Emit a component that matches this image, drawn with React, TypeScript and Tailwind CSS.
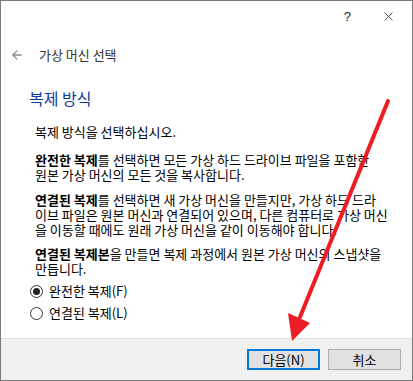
import { ArrowLeft, X } from "lucide-react";

function Radio({ checked, label }: { checked?: boolean; label: string }) {
  return (
    <label className="flex items-center gap-[6px] h-[20px]">
      <span className="w-[13px] h-[13px] rounded-full border border-[#333] bg-white flex items-center justify-center">
        {checked && <span className="w-[7px] h-[7px] rounded-full bg-[#222]" />}
      </span>
      <span>{label}</span>
    </label>
  );
}

export default function App() {
  return (
    <div className="relative w-[413px] h-[381px] bg-white border border-[#7a7a7a] flex flex-col text-[13px] text-black font-['Noto_Sans_CJK_KR','Noto_Sans',sans-serif] overflow-hidden">
      {/* title bar */}
      <div className="h-[31px] flex justify-end items-center pr-[16px] gap-[30px] shrink-0">
        <span className="text-[13px] font-['Liberation_Sans',sans-serif] text-[#222]">?</span>
        <X className="w-[15px] h-[15px] text-[#222]" strokeWidth={1.2} />
      </div>

      {/* back + breadcrumb */}
      <div className="mt-[13px] h-[20px] flex items-center pl-[9px] gap-[15px] shrink-0">
        <ArrowLeft className="w-[14px] h-[14px] text-[#8a8a8a]" strokeWidth={2.2} />
        <span className="text-[#333]">가상 머신 선택</span>
      </div>

      {/* body */}
      <div className="pl-[28px] pr-[10px]">
        <h1 className="mt-[21px] h-[24px] leading-[24px] text-[16px] text-[#0d3aa0]">복제 방식</h1>

        <div className="pl-[6px] leading-[15px] whitespace-nowrap">
          <p className="mt-[14px]">복제 방식을 선택하십시오.</p>
          <p className="mt-[13px]">
            <b>완전한 복제</b>를 선택하면 모든 가상 하드 드라이브 파일을 포함한
            <br />
            원본 가상 머신의 모든 것을 복사합니다.
          </p>
          <p className="mt-[10px]">
            <b>연결된 복제</b>를 선택하면 새 가상 머신을 만들지만, 가상 하드 드라
            <br />
            이브 파일은 원본 머신과 연결되어 있으며, 다른 컴퓨터로 가상 머신
            <br />
            을 이동할 때에도 원래 가상 머신을 같이 이동해야 합니다.
          </p>
          <p className="mt-[9px]">
            <b>연결된 복제본</b>을 만들면 복제 과정에서 원본 가상 머신의 스냅샷을
            <br />
            만듭니다.
          </p>
        </div>

        <div className="mt-[5px] flex flex-col gap-[2px] pl-[1px]">
          <Radio checked label="완전한 복제(F)" />
          <Radio label="연결된 복제(L)" />
        </div>
      </div>

      {/* footer */}
      <div className="mt-auto h-[42px] bg-[#f0f0f0] border-t border-[#dfdfdf] flex items-center justify-end gap-[8px] pr-[11px] shrink-0">
        <button className="w-[73px] h-[21px] bg-[#e1e1e1] border-2 border-[#0078d7] text-[13px] leading-none">
          다음(N)
        </button>
        <button className="w-[73px] h-[21px] bg-[#e1e1e1] border border-[#adadad] text-[13px] leading-none">
          취소
        </button>
      </div>

      {/* red annotation arrow */}
      <svg className="absolute left-0 top-0 pointer-events-none" width="413" height="381">
        <line x1="387" y1="100" x2="299" y2="316" stroke="#ee1c25" strokeWidth="4" strokeLinecap="round" />
        <polygon points="287,312 309,322 291,340" fill="#ee1c25" />
      </svg>
    </div>
  );
}
